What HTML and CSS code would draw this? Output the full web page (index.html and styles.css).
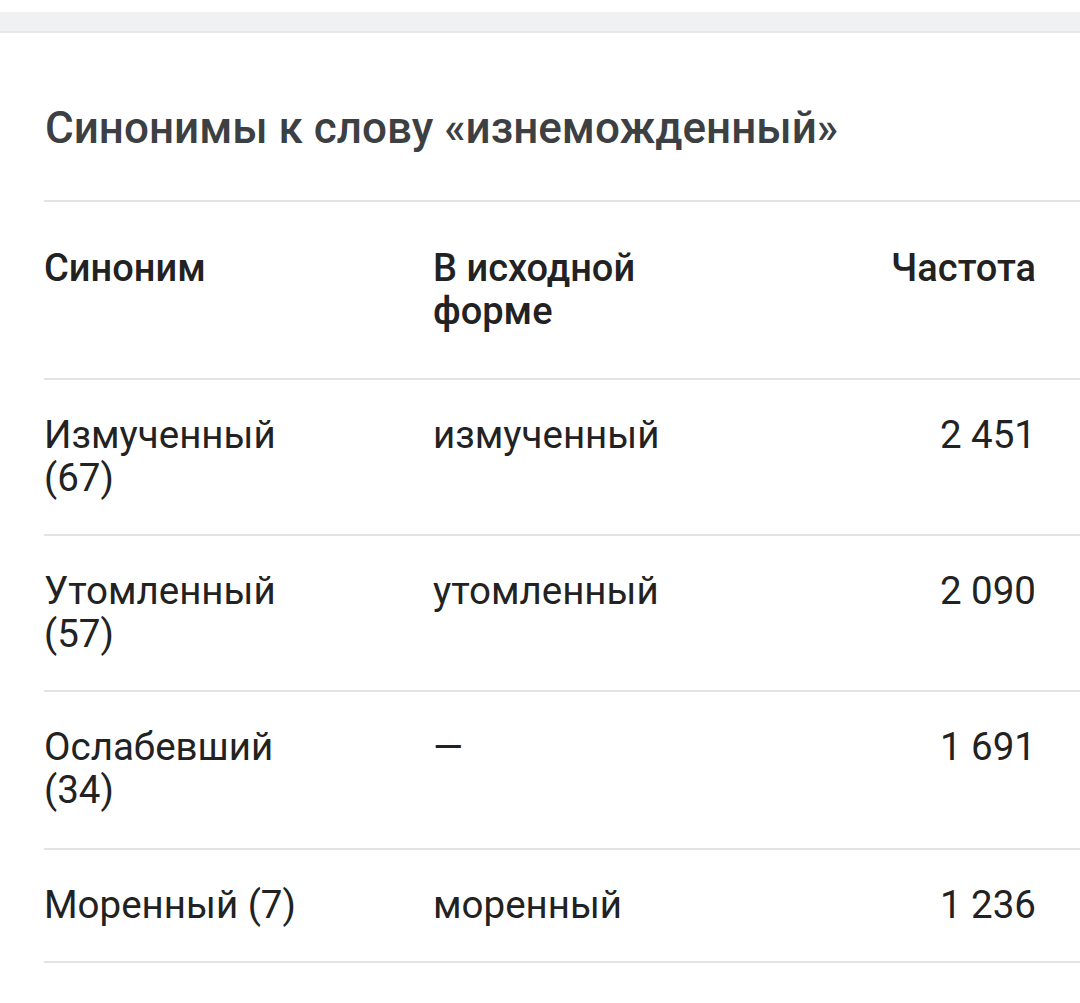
FILE: index.html
```html
<!DOCTYPE html>
<html lang="ru">
<head>
<meta charset="utf-8">
<link rel="stylesheet" href="styles.css">
</head>
<body>
<div class="topband"></div>
<section class="card">
  <h2 class="title">Синонимы к слову «изнеможденный»</h2>
  <table class="syn">
    <thead>
      <tr>
        <th class="c1">Синоним</th>
        <th class="c2">В исходной форме</th>
        <th class="c3">Частота</th>
      </tr>
    </thead>
    <tbody>
      <tr><td class="c1">Измученный (67)</td><td class="c2">измученный</td><td class="c3">2 451</td></tr>
      <tr><td class="c1">Утомленный (57)</td><td class="c2">утомленный</td><td class="c3">2 090</td></tr>
      <tr class="r3"><td class="c1">Ослабевший (34)</td><td class="c2">—</td><td class="c3">1 691</td></tr>
      <tr class="short"><td class="c1">Моренный (7)</td><td class="c2">моренный</td><td class="c3">1 236</td></tr>
    </tbody>
  </table>
</section>
</body>
</html>
```

FILE: styles.css
```css
html, body {
  margin: 0;
  padding: 0;
  background: #ffffff;
}
body {
  font-family: Roboto, "Noto Sans", sans-serif;
  color: #222222;
  overflow: hidden;
}
.topband {
  margin-top: 12px;
  height: 19px;
  background: #f0f1f3;
  border-bottom: 2px solid #e6e7e9;
}
.card {
  padding: 0 0 0 44px;
}
.title {
  margin: 0;
  padding: 69px 0 0 1px;
  height: 98px;
  box-sizing: content-box;
  font-size: 44px;
  font-weight: 500;
  line-height: 52px;
  color: #3c4043;
}
.syn {
  width: 1036px;
  table-layout: fixed;
  border-collapse: collapse;
  border-top: 2px solid #e3e3e3;
}
.syn th, .syn td {
  text-align: left;
  vertical-align: top;
  padding: 0 100px 0 0;
  font-size: 38px;
  line-height: 43px;
  color: #222222;
  box-sizing: border-box;
}
.syn th {
  font-weight: 500;
  padding-top: 45px;
  height: 178px;
}
.syn tr {
  border-bottom: 2px solid #e3e3e3;
}
.syn td {
  height: 156px;
  padding-top: 33px;
  font-size: 38.5px;
  font-weight: 400;
}
.syn tr.r3 td {
  height: 158px;
}
.syn tr.short td {
  height: 113px;
}
.syn .c1 { width: 389px; }
.syn .c2 { width: 387px; }
.syn .c3 {
  text-align: right;
  padding-right: 44px;
}
```
